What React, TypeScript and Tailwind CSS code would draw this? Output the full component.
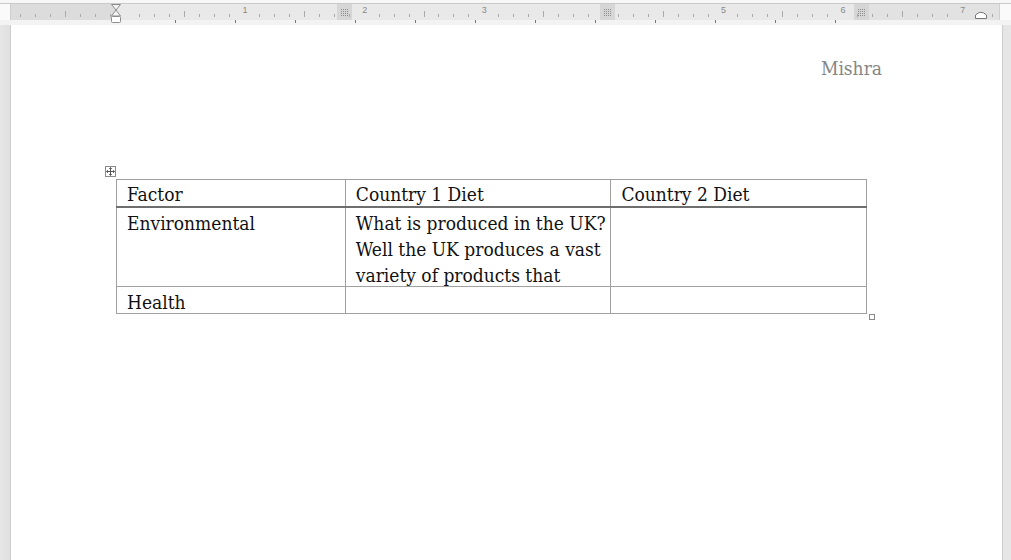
import React from "react";

const serif = { fontFamily: '"DejaVu Serif Condensed", "DejaVu Serif", serif' };

const ORIGIN = 125;
const INCH = 119.6;

function RulerMarks() {
  const ticks: React.ReactNode[] = [];
  for (let i = -8; i <= 7 * 8 + 2; i++) {
    const x = ORIGIN + (i * INCH) / 8;
    if (x < 12 || x > 996) continue;
    if (i % 8 === 0) continue;
    const half = i % 4 === 0;
    ticks.push(
      <line
        key={"t" + i}
        x1={x}
        x2={x}
        y1={half ? 11 : 14}
        y2={17}
        stroke="#a9a9a9"
        strokeWidth={1}
        shapeRendering="crispEdges"
      />
    );
  }
  const nums = [1, 2, 3, 5, 6, 7];
  const below: number[] = [];
  for (let n = 1; n <= 12; n++) below.push(115 + 60 * n);
  return (
    <svg width="1011" height="26" className="absolute left-0 top-0">
      {ticks}
      {nums.map((n) => (
        <text
          key={n}
          x={ORIGIN + n * INCH - 2}
          y={13}
          fontSize="9"
          fill="#8a8a8a"
          fontFamily="Liberation Sans, sans-serif"
        >
          {n}
        </text>
      ))}
      {below.map((x) => (
        <line key={x} x1={x} x2={x} y1={20} y2={23} stroke="#777" shapeRendering="crispEdges" />
      ))}
      {/* left indent marker */}
      <path d="M111.5 4.5 L120.5 4.5 L116 10 L120.5 16 L111.5 16 L116 10 Z" fill="#f4f4f4" stroke="#8d8d8d" />
      <rect x="111.5" y="16.5" width="9" height="6" rx="1" fill="#fff" stroke="#8d8d8d" />
      {/* right indent marker */}
      <path d="M975.5 18.5 L975.5 15 Q981 9.5 986.5 15 L986.5 18.5 Z" fill="#fff" stroke="#777" />
    </svg>
  );
}

function ColumnMarker() {
  return (
    <div className="w-[15px] h-full bg-[#d6d6d6] flex items-center justify-center">
      <div className="grid grid-cols-4 gap-[1px]">
        {Array.from({ length: 16 }).map((_, i) => (
          <div key={i} className="w-[1px] h-[1px] bg-[#8c8c8c]" />
        ))}
      </div>
    </div>
  );
}

function Ruler() {
  return (
    <div className="relative h-[25px] shrink-0 bg-[#f3f3f3]">
      <div className="h-[3px] bg-[#f7f7f7]" />
      <div className="flex h-[17px] border-t border-[#c9c9c9]">
        <div className="w-[10px] bg-[#fafafa]" />
        <div className="w-[106px] bg-[#dcdcdc] border-l border-[#cfcfcf]" />
        <div className="w-[221px] bg-[#e9e9e9]" />
        <ColumnMarker />
        <div className="w-[248px] bg-[#e9e9e9]" />
        <ColumnMarker />
        <div className="w-[239px] bg-[#e9e9e9]" />
        <ColumnMarker />
        <div className="w-[130px] bg-[#e2e2e2]" />
        <div className="flex-1 bg-[#fafafa] border-l border-[#cfcfcf]" />
      </div>
      <RulerMarks />
    </div>
  );
}

function MoveHandle() {
  return (
    <div className="absolute left-[-11px] top-[-13px] w-[11px] h-[11px] bg-white border border-[#8a8a8a] flex items-center justify-center">
      <svg width="9" height="9" viewBox="0 0 9 9">
        <path d="M4.5 0.5 V8.5 M0.5 4.5 H8.5" stroke="#555" strokeWidth="1" />
        <path d="M3 2 L4.5 0.5 L6 2 M3 7 L4.5 8.5 L6 7 M2 3 L0.5 4.5 L2 6 M7 3 L8.5 4.5 L7 6" stroke="#555" fill="none" strokeWidth="0.8" />
      </svg>
    </div>
  );
}

const rows = [
  ["Environmental", "What is produced in the UK? Well the UK produces a vast variety of products that", ""],
  ["Health", "", ""],
];

export default function App() {
  return (
    <div className="w-[1011px] h-[560px] overflow-hidden bg-[#ececec] flex flex-col">
      <Ruler />
      <div className="flex flex-1">
        <div className="w-[11px] bg-gradient-to-r from-[#e6e6e6] to-[#e0e0e0] border-r border-[#cdcdcd]" />
        <div className="flex-1 bg-white pt-[30px] pl-[105px] pr-[120px]">
          <div className="text-right text-[19px] leading-[26px] text-[#858585]" style={serif}>
            Mishra
          </div>
          <div className="relative mt-[98px] w-[751px]">
            <MoveHandle />
            <table className="border-collapse text-[19px] leading-[26px] text-[#111]" style={serif}>
              <colgroup>
                <col className="w-[229px]" />
                <col className="w-[266px]" />
                <col className="w-[256px]" />
              </colgroup>
              <thead>
                <tr className="h-[27px]">
                  {["Factor", "Country 1 Diet", "Country 2 Diet"].map((h) => (
                    <th
                      key={h}
                      className="border border-[#a0a0a0] border-b-2 border-b-[#6e6e6e] pl-[10px] pr-[4px] p-0 text-left font-normal align-top"
                    >
                      <div className="pt-[1px] -mb-[1px]">{h}</div>
                    </th>
                  ))}
                </tr>
              </thead>
              <tbody>
                {rows.map((r) => (
                  <tr key={r[0]}>
                    {r.map((c, i) => (
                      <td key={i} className="border border-[#a0a0a0] pl-[10px] pr-[4px] py-0 align-top h-[26px]">
                        <div className="pt-[2px] -mb-[2px]">{c}</div>
                      </td>
                    ))}
                  </tr>
                ))}
              </tbody>
            </table>
            <div className="absolute right-[-8px] bottom-[-6px] w-[6px] h-[6px] bg-white border border-[#8a8a8a]" />
          </div>
        </div>
        <div className="w-[9px] bg-[#e6e6e6] border-l border-[#cdcdcd]" />
      </div>
    </div>
  );
}
